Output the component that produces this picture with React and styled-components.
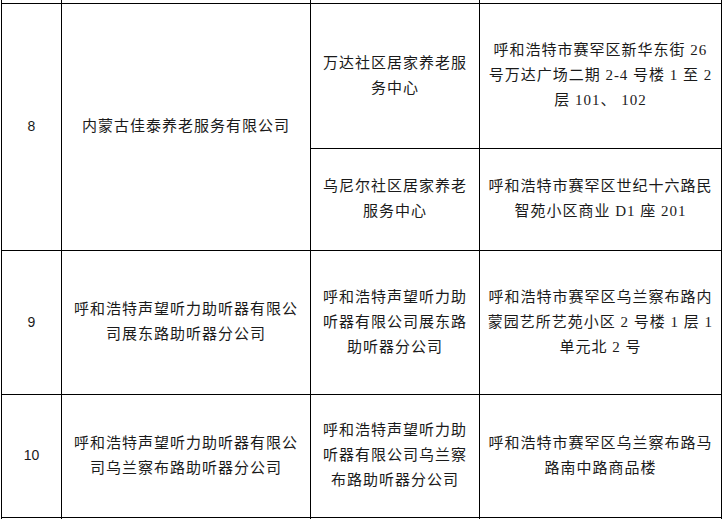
import React from 'react';
import styled, { createGlobalStyle } from 'styled-components';

const Global = createGlobalStyle`
  html, body { margin: 0; padding: 0; background: #fff; overflow: hidden; }
  body { width: 725px; height: 520px; }
`;

const Table = styled.table`
  border-collapse: collapse;
  table-layout: fixed;
  width: 720px;
  margin-left: 1px;
  font-family: "Liberation Serif", "Noto Sans CJK SC", serif;
  font-size: 15px;
  letter-spacing: 1px;
  line-height: 25px;
  color: #1a1a1a;
`;

const Col = styled.col`
  width: ${(p) => p.$w}px;
`;

const Row = styled.tr`
  height: ${(p) => p.$h}px;
`;

const Cell = styled.td`
  border: 1px solid #000;
  text-align: center;
  vertical-align: middle;
  padding: 0 4px;
  white-space: nowrap;
`;

const NumCell = styled(Cell)`
  font-family: "Liberation Sans", "Noto Sans CJK SC", sans-serif;
  font-size: 14px;
  letter-spacing: 0;
`;

const EdgeCell = styled.td`
  border-left: 1px solid #000;
  border-right: 1px solid #000;
  padding: 0;
`;

const Lines = ({ lines }) =>
  lines.map((l, i) => (
    <React.Fragment key={i}>
      {i > 0 && <br />}
      {l}
    </React.Fragment>
  ));

export default function App() {
  return (
    <>
      <Global />
      <Table>
        <colgroup>
          <Col $w={60} />
          <Col $w={249} />
          <Col $w={169} />
          <Col $w={242} />
        </colgroup>
        <tbody>
          <Row $h={3}>
            <EdgeCell />
            <EdgeCell />
            <EdgeCell />
            <EdgeCell />
          </Row>
          <Row $h={145}>
            <NumCell rowSpan={2}>8</NumCell>
            <Cell rowSpan={2}>内蒙古佳泰养老服务有限公司</Cell>
            <Cell><Lines lines={['万达社区居家养老服', '务中心']} /></Cell>
            <Cell>
              <Lines lines={['呼和浩特市赛罕区新华东街 26', '号万达广场二期 2-4 号楼 1 至 2', '层 101、 102']} />
            </Cell>
          </Row>
          <Row $h={102}>
            <Cell><Lines lines={['乌尼尔社区居家养老', '服务中心']} /></Cell>
            <Cell><Lines lines={['呼和浩特市赛罕区世纪十六路民', '智苑小区商业 D1 座 201']} /></Cell>
          </Row>
          <Row $h={144}>
            <NumCell>9</NumCell>
            <Cell><Lines lines={['呼和浩特声望听力助听器有限公', '司展东路助听器分公司']} /></Cell>
            <Cell><Lines lines={['呼和浩特声望听力助', '听器有限公司展东路', '助听器分公司']} /></Cell>
            <Cell>
              <Lines lines={['呼和浩特市赛罕区乌兰察布路内', '蒙园艺所艺苑小区 2 号楼 1 层 1', '单元北 2 号']} />
            </Cell>
          </Row>
          <Row $h={123}>
            <NumCell>10</NumCell>
            <Cell><Lines lines={['呼和浩特声望听力助听器有限公', '司乌兰察布路助听器分公司']} /></Cell>
            <Cell><Lines lines={['呼和浩特声望听力助', '听器有限公司乌兰察', '布路助听器分公司']} /></Cell>
            <Cell><Lines lines={['呼和浩特市赛罕区乌兰察布路马', '路南中路商品楼']} /></Cell>
          </Row>
          <Row $h={2}>
            <EdgeCell />
            <EdgeCell />
            <EdgeCell />
            <EdgeCell />
          </Row>
        </tbody>
      </Table>
    </>
  );
}
